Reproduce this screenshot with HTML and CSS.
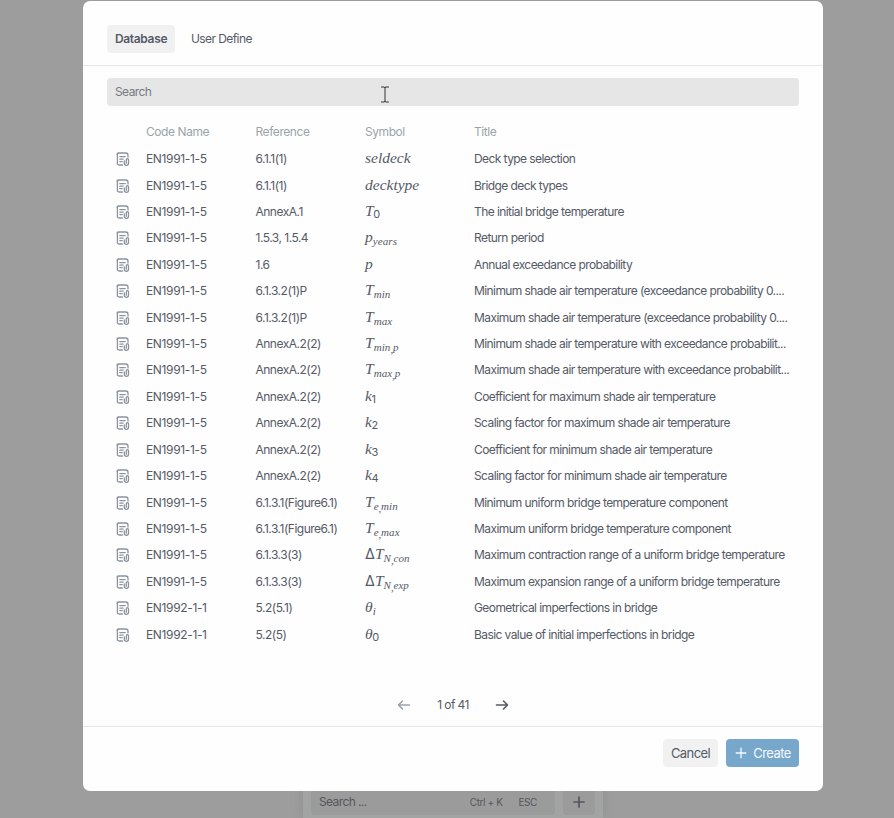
FILE: index.html
```
<!DOCTYPE html>
<html lang="en">
<head>
<meta charset="utf-8">
<title>Database</title>
<link rel="stylesheet" href="styles.css">
</head>
<body>
<svg class="defs" width="0" height="0">
  <symbol id="doc" viewBox="0 0 14 14">
    <path d="M12 5V3.2Q12 1 9.8 1H3.2Q1 1 1.4 3.2V10.8Q1 13 3.2 13H6.4M1.4 3.4Q.4 1.4 2.4 1M3.8 4.6h5.4M3.8 7.1h3.4M3.8 9.6h2.4"/>
    <path d="M8.3 8.9v2.3a2.1 2.1 0 0 0 4.2 0V7.8a1.1 1.1 0 0 0-2.2 0v3.4"/>
  </symbol>
</svg>
<div class="palette">
  <div class="palette-search"><span class="grow">Search ...</span><span class="key">Ctrl + K</span><span class="key">ESC</span></div>
  <div class="palette-add"><svg width="12" height="12" viewBox="0 0 12 12"><path d="M6 1v10M1 6h10"/></svg></div>
</div>
<main class="modal">
  <nav class="tabs"><span class="tab active">Database</span><span class="tab">User Define</span></nav>
  <section class="content">
    <div class="search">Search
      <svg class="cursor" width="8" height="17" viewBox="0 0 8 17"><path d="M.5 1h2.5l1 .6 1-.6h2.5M4 1.5v14M.5 16H3l1-.6 1 .6h2.5"/></svg>
    </div>
    <div class="table">
      <div class="row head"><span></span><span>Code Name</span><span>Reference</span><span>Symbol</span><span>Title</span></div>
      <div class="row"><svg class="doc"><use href="#doc"/></svg><span>EN1991-1-5</span><span>6.1.1(1)</span><span class="math">seldeck</span><span>Deck type selection</span></div>
      <div class="row"><svg class="doc"><use href="#doc"/></svg><span>EN1991-1-5</span><span>6.1.1(1)</span><span class="math">decktype</span><span>Bridge deck types</span></div>
      <div class="row"><svg class="doc"><use href="#doc"/></svg><span>EN1991-1-5</span><span>AnnexA.1</span><span class="math">T<sub class="num">0</sub></span><span>The initial bridge temperature</span></div>
      <div class="row"><svg class="doc"><use href="#doc"/></svg><span>EN1991-1-5</span><span>1.5.3, 1.5.4</span><span class="math">p<sub>years</sub></span><span>Return period</span></div>
      <div class="row"><svg class="doc"><use href="#doc"/></svg><span>EN1991-1-5</span><span>1.6</span><span class="math">p</span><span>Annual exceedance probability</span></div>
      <div class="row"><svg class="doc"><use href="#doc"/></svg><span>EN1991-1-5</span><span>6.1.3.2(1)P</span><span class="math">T<sub>min</sub></span><span>Minimum shade air temperature (exceedance probability 0....</span></div>
      <div class="row"><svg class="doc"><use href="#doc"/></svg><span>EN1991-1-5</span><span>6.1.3.2(1)P</span><span class="math">T<sub>max</sub></span><span>Maximum shade air temperature (exceedance probability 0....</span></div>
      <div class="row"><svg class="doc"><use href="#doc"/></svg><span>EN1991-1-5</span><span>AnnexA.2(2)</span><span class="math">T<sub>min<b>,</b>p</sub></span><span>Minimum shade air temperature with exceedance probabilit...</span></div>
      <div class="row"><svg class="doc"><use href="#doc"/></svg><span>EN1991-1-5</span><span>AnnexA.2(2)</span><span class="math">T<sub>max<b>,</b>p</sub></span><span>Maximum shade air temperature with exceedance probabilit...</span></div>
      <div class="row"><svg class="doc"><use href="#doc"/></svg><span>EN1991-1-5</span><span>AnnexA.2(2)</span><span class="math">k<sub class="num">1</sub></span><span>Coefficient for maximum shade air temperature</span></div>
      <div class="row"><svg class="doc"><use href="#doc"/></svg><span>EN1991-1-5</span><span>AnnexA.2(2)</span><span class="math">k<sub class="num">2</sub></span><span>Scaling factor for maximum shade air temperature</span></div>
      <div class="row"><svg class="doc"><use href="#doc"/></svg><span>EN1991-1-5</span><span>AnnexA.2(2)</span><span class="math">k<sub class="num">3</sub></span><span>Coefficient for minimum shade air temperature</span></div>
      <div class="row"><svg class="doc"><use href="#doc"/></svg><span>EN1991-1-5</span><span>AnnexA.2(2)</span><span class="math">k<sub class="num">4</sub></span><span>Scaling factor for minimum shade air temperature</span></div>
      <div class="row"><svg class="doc"><use href="#doc"/></svg><span>EN1991-1-5</span><span>6.1.3.1(Figure6.1)</span><span class="math">T<sub>e<b>,</b>min</sub></span><span>Minimum uniform bridge temperature component</span></div>
      <div class="row"><svg class="doc"><use href="#doc"/></svg><span>EN1991-1-5</span><span>6.1.3.1(Figure6.1)</span><span class="math">T<sub>e<b>,</b>max</sub></span><span>Maximum uniform bridge temperature component</span></div>
      <div class="row"><svg class="doc"><use href="#doc"/></svg><span>EN1991-1-5</span><span>6.1.3.3(3)</span><span class="math"><span class="delta">Δ</span>T<sub>N<b>,</b>con</sub></span><span>Maximum contraction range of a uniform bridge temperature</span></div>
      <div class="row"><svg class="doc"><use href="#doc"/></svg><span>EN1991-1-5</span><span>6.1.3.3(3)</span><span class="math"><span class="delta">Δ</span>T<sub>N<b>,</b>exp</sub></span><span>Maximum expansion range of a uniform bridge temperature</span></div>
      <div class="row"><svg class="doc"><use href="#doc"/></svg><span>EN1992-1-1</span><span>5.2(5.1)</span><span class="math">θ<sub>i</sub></span><span>Geometrical imperfections in bridge</span></div>
      <div class="row"><svg class="doc"><use href="#doc"/></svg><span>EN1992-1-1</span><span>5.2(5)</span><span class="math">θ<sub class="num">0</sub></span><span>Basic value of initial imperfections in bridge</span></div>
    </div>
    <div class="pager">
      <svg class="prev" width="14" height="12" viewBox="0 0 14 12"><path d="M12.5 6H1.5M5.5 2L1.5 6L5.5 10"/></svg>
      <span>1 of 41</span>
      <svg width="14" height="12" viewBox="0 0 14 12"><path d="M1.5 6h11M8.5 2L12.5 6L8.5 10"/></svg>
    </div>
  </section>
  <footer class="footer">
    <span class="button">Cancel</span>
    <span class="button primary"><svg width="12" height="12" viewBox="0 0 12 12"><path d="M6 1.2v9.6M1.2 6h9.6"/></svg>Create</span>
  </footer>
</main>
</body>
</html>
```
FILE: styles.css
```
* { box-sizing: border-box; }
body {
  margin: 0;
  height: 818px;
  overflow: hidden;
  position: relative;
  background: #9d9d9d;
  color: #555a66;
  font: 12px/16px Inter, sans-serif;
  letter-spacing: -0.58px;
}
svg { fill: none; stroke: currentColor; stroke-linecap: round; stroke-linejoin: round; flex: none; }
.defs { position: absolute; }
.modal {
  position: absolute;
  left: 83px;
  top: 1px;
  width: 740px;
  height: 790px;
  display: flex;
  flex-direction: column;
  background: #fefefe;
  border-radius: 7px;
}
.tabs {
  height: 65px;
  flex: none;
  padding: 24px 24px 0;
  display: flex;
  gap: 8px;
  border-bottom: 1px solid #e7e7e9;
}
.tab { height: 28px; padding: 6px 8px; border-radius: 4px; }
.active { width: 68px; background: #f1f1f2; font-weight: 600; letter-spacing: -0.35px; }
.content { height: 660px; padding: 12px 24px 0; display: flex; flex-direction: column; }
.search {
  position: relative;
  height: 28px;
  flex: none;
  padding: 6px 8px;
  border-radius: 4px;
  background: #e6e6e6;
  color: #76797f;
}
.cursor { position: absolute; left: 274px; top: 8px; color: #333; }
.table { padding-top: 12.6px; height: 585px; flex: none; }
.row {
  height: 26.43px;
  display: grid;
  grid-template-columns: 30.5px 109.5px 109.5px 109px 1fr;
  padding-left: 8.5px;
  align-items: center;
  white-space: nowrap;
}
.row > :nth-child(2) { letter-spacing: -0.35px; }
.row > :nth-child(3) { letter-spacing: -0.5px; }
.row.head { color: #9aa5ab; height: 27.3px; padding-bottom: 1px; }
.row.head > span { letter-spacing: -0.43px; }
.doc { width: 14px; height: 14px; color: #8b93a0; stroke-width: 1.3; }
.math { font: italic 15.5px/20px "Liberation Serif", serif; letter-spacing: 0; position: relative; top: -1px; }
.math sub { font-size: 11px; line-height: 0; vertical-align: -3px; letter-spacing: .1px; }
.math .num { font: 11px/0 Inter, sans-serif; letter-spacing: 0; margin-left: -.5px; vertical-align: -2px; }
.math b { font-weight: 400; position: relative; top: 2px; letter-spacing: -.3px; }
.delta { font: 14.5px/0 Inter, sans-serif; }
.pager { display: flex; align-items: center; justify-content: center; gap: 26px; height: 28px; }
.pager svg { stroke-width: 1.6; }
.prev { color: #9ca3af; }
.footer {
  height: 65px;
  flex: none;
  border-top: 1px solid #e6e6ec;
  padding: 12px 24px;
  display: flex;
  justify-content: flex-end;
  gap: 8px;
}
.button {
  width: 55px;
  height: 28px;
  display: flex;
  align-items: center;
  justify-content: center;
  gap: 6px;
  background: #f1f1f2;
  border-radius: 4px;
  font-size: 13px;
  letter-spacing: -0.58px;
}
.primary { width: 73px; padding-left: 1px; background: #78a7cc; color: #f4f9fd; }
.button svg { stroke-width: 1.3; }
.palette {
  position: absolute;
  left: 303px;
  top: 778px;
  width: 300px;
  height: 40px;
  background: #a2a4a4;
  padding: 9px 8px 3px;
  display: flex;
  gap: 8px;
  box-shadow: 0 0 10px #8f8f8f;
  color: #55565e;
}
.palette-search { width: 244px; padding: 7px 18px 5px 8px; display: flex; gap: 16px; background: #9b9b9b; border-radius: 4px; }
.grow { flex: 1; letter-spacing: -0.6px; }
.key { font-size: 10px; letter-spacing: -0.4px; }
.palette-add { width: 32px; display: flex; padding-top: 9px; justify-content: center; background: #9b9b9b; border-radius: 4px; }
.palette-add svg { stroke-width: 1.7; }
```
